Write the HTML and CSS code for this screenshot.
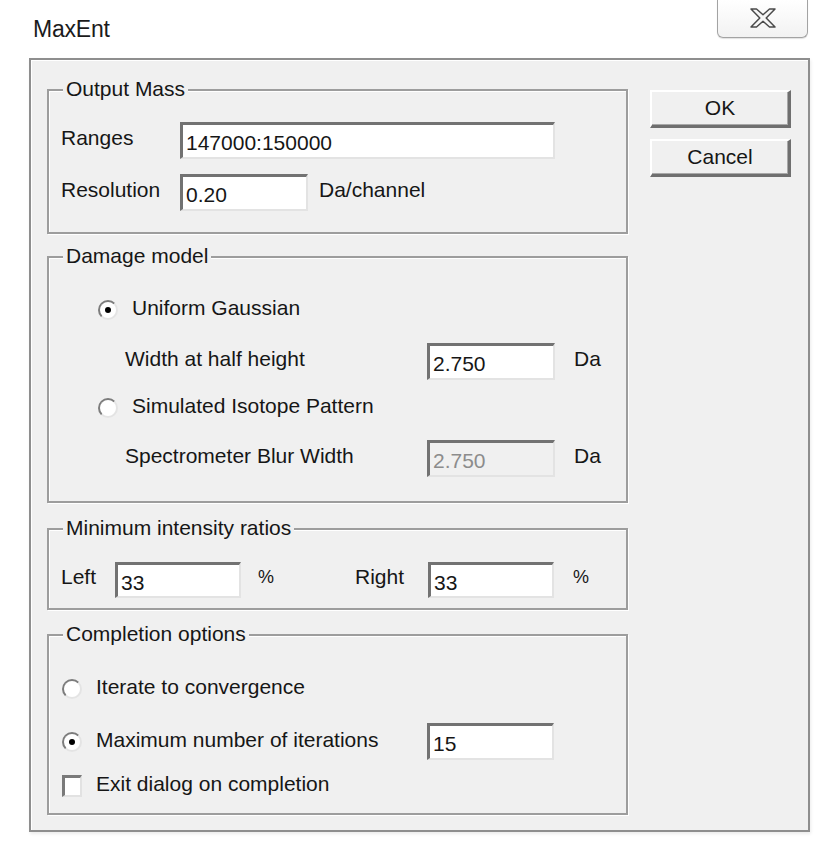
FILE: index.html
```html
<!DOCTYPE html>
<html>
<head>
<meta charset="utf-8">
<title>MaxEnt</title>
<link rel="stylesheet" href="styles.css">
</head>
<body>
<div class="titlebar">
  <span class="title">MaxEnt</span>
  <div class="close">
    <svg width="26" height="20" viewBox="0 0 26 20">
      <polygon points="1,1 6.5,1 13,6.8 19.5,1 25,1 16.2,10 25,19 19.5,19 13,13.2 6.5,19 1,19 9.8,10" fill="#f6f6f6" stroke="#4a4a4a" stroke-width="1.5" stroke-linejoin="round"/>
    </svg>
  </div>
</div>
<div class="dialog">
  <div class="main">
    <div class="group g1">
      <span class="legend">Output Mass</span>
      <div class="row">
        <span class="lbl w119">Ranges</span>
        <div class="field w375">147000:150000</div>
      </div>
      <div class="row mt15">
        <span class="lbl w119">Resolution</span>
        <div class="field w128">0.20</div>
        <span class="lbl unit1">Da/channel</span>
      </div>
    </div>

    <div class="group g2">
      <span class="legend">Damage model</span>
      <div class="opt ind49">
        <span class="radio on"></span>
        <span class="opttext">Uniform Gaussian</span>
      </div>
      <div class="row mt18 ind76">
        <span class="lbl w302">Width at half height</span>
        <div class="field w128">2.750</div>
        <span class="lbl unit2">Da</span>
      </div>
      <div class="opt mt13 ind49">
        <span class="radio"></span>
        <span class="opttext">Simulated Isotope Pattern</span>
      </div>
      <div class="row mt17 ind76">
        <span class="lbl w302">Spectrometer Blur Width</span>
        <div class="field w128 disabled">2.750</div>
        <span class="lbl unit2">Da</span>
      </div>
    </div>

    <div class="group g3">
      <span class="legend">Minimum intensity ratios</span>
      <div class="row ind12">
        <span class="lbl w54">Left</span>
        <div class="field w126">33</div>
        <span class="lbl pct1">%</span>
        <span class="lbl w73">Right</span>
        <div class="field w126">33</div>
        <span class="lbl pct2">%</span>
      </div>
    </div>

    <div class="group g4">
      <span class="legend">Completion options</span>
      <div class="opt ind13">
        <span class="radio"></span>
        <span class="opttext">Iterate to convergence</span>
      </div>
      <div class="row mt19 ind13">
        <span class="radio on"></span>
        <span class="opttext w331">Maximum number of iterations</span>
        <div class="field w127">15</div>
      </div>
      <div class="opt mt11 ind13">
        <span class="check"></span>
        <span class="opttext">Exit dialog on completion</span>
      </div>
    </div>
  </div>
  <div class="buttons">
    <div class="btn">OK</div>
    <div class="btn">Cancel</div>
  </div>
</div>
</body>
</html>
```

FILE: styles.css
```css
* { box-sizing: border-box; }
html, body { margin: 0; padding: 0; }
body {
  width: 823px;
  height: 847px;
  background: #ffffff;
  font-family: "Liberation Sans", Arial, sans-serif;
  color: #161616;
  overflow: hidden;
}
.titlebar {
  height: 58px;
  display: flex;
  align-items: flex-start;
  justify-content: space-between;
  padding-left: 33px;
  padding-right: 15px;
}
.title {
  font-size: 23px;
  line-height: 26px;
  margin-top: 16px;
  color: #1b1b1b;
  letter-spacing: -0.2px;
}
.close {
  width: 91px;
  height: 38px;
  border: 1px solid #a3a3a3;
  border-top: none;
  border-radius: 0 0 6px 6px;
  background: linear-gradient(#ffffff, #f2f2f2);
  box-shadow: 0 1px 1px rgba(0,0,0,0.12);
  display: flex;
  align-items: center;
  justify-content: center;
  padding-bottom: 2px;
}
.dialog {
  margin-left: 29px;
  width: 781px;
  height: 774px;
  background: #f0f0f0;
  border: 2px solid #8e8e8e;
  box-shadow: inset 1px 1px 0 #ffffff, 1px 2px 3px rgba(0,0,0,0.08);
  display: flex;
  padding: 29px 17px 0 16px;
  font-size: 21px;
}
.main { width: 581px; }
.buttons {
  width: 141px;
  margin-left: 22px;
  padding-top: 1px;
  display: flex;
  flex-direction: column;
  gap: 11px;
}
.btn {
  height: 38px;
  background: #f0f0f0;
  border-top: 2px solid #ffffff;
  border-left: 2px solid #ffffff;
  border-right: 3px solid #6f6f6f;
  border-bottom: 3px solid #6f6f6f;
  box-shadow: inset -1px -1px 0 #a8a8a8;
  display: flex;
  align-items: center;
  justify-content: center;
  font-size: 21px;
  color: #161616;
  padding-bottom: 1px;
}
.group {
  position: relative;
  width: 581px;
  border: 2px solid #9d9d9d;
  box-shadow: inset 1px 1px 0 #ffffff, 1px 1px 0 #ffffff;
}
.legend {
  position: absolute;
  left: 14px;
  top: -14px;
  line-height: 24px;
  padding: 0 3px;
  background: #f0f0f0;
}
.g1 { height: 145px; padding: 31px 0 0 12px; margin-bottom: 22px; }
.g2 { height: 247px; padding-top: 37px; margin-bottom: 25px; }
.g3 { height: 82px; padding-top: 32px; margin-bottom: 24px; }
.g4 { height: 181px; padding-top: 38px; }

.row { display: flex; align-items: center; height: 37px; }
.opt { display: flex; align-items: center; height: 30px; }
.g3 .row { height: 36px; }

.mt11 { margin-top: 11px; }
.mt13 { margin-top: 13px; }
.mt15 { margin-top: 15px; }
.mt17 { margin-top: 17px; }
.mt18 { margin-top: 18px; }
.mt19 { margin-top: 19px; }
.ind12 { padding-left: 12px; }
.ind13 { padding-left: 13px; }
.ind49 { padding-left: 49px; }
.ind76 { padding-left: 76px; }

.lbl { white-space: nowrap; padding-bottom: 6px; }
.w54 { width: 54px; }
.w73 { width: 73px; }
.w119 { width: 119px; }
.w302 { width: 302px; }
.w331 { width: 331px; }
.unit1 { margin-left: 11px; }
.unit2 { margin-left: 19px; }
.pct1 { margin-left: 17px; width: 97px; font-size: 18px; }
.pct2 { margin-left: 19px; font-size: 18px; }

.field {
  height: 100%;
  background: #ffffff;
  border-top: 3px solid #727272;
  border-left: 3px solid #727272;
  border-right: 2px solid #e3e3e3;
  border-bottom: 2px solid #e3e3e3;
  padding: 6px 0 0 3px;
  line-height: 24px;
  white-space: nowrap;
  overflow: hidden;
  color: #161616;
}
.field.disabled { background: #f0f0f0; color: #8c8c8c; }
.w126 { width: 126px; }
.w127 { width: 127px; }
.w128 { width: 128px; }
.w375 { width: 375px; }

.opttext { margin-left: 14px; white-space: nowrap; padding-bottom: 4px; }

.radio {
  flex: none;
  width: 20px;
  height: 20px;
  border-radius: 50%;
  background: #ffffff;
  border: 2px solid;
  border-color: #7c7c7c #e4e4e4 #e4e4e4 #7c7c7c;
  display: flex;
  align-items: center;
  justify-content: center;
}
.radio.on::after {
  content: "";
  width: 6px;
  height: 6px;
  border-radius: 50%;
  background: #000;
}
.check {
  flex: none;
  width: 20px;
  height: 22px;
  background: #ffffff;
  border-top: 3px solid #7a7a7a;
  border-left: 3px solid #7a7a7a;
  border-right: 2px solid #e2e2e2;
  border-bottom: 2px solid #e2e2e2;
}
```
